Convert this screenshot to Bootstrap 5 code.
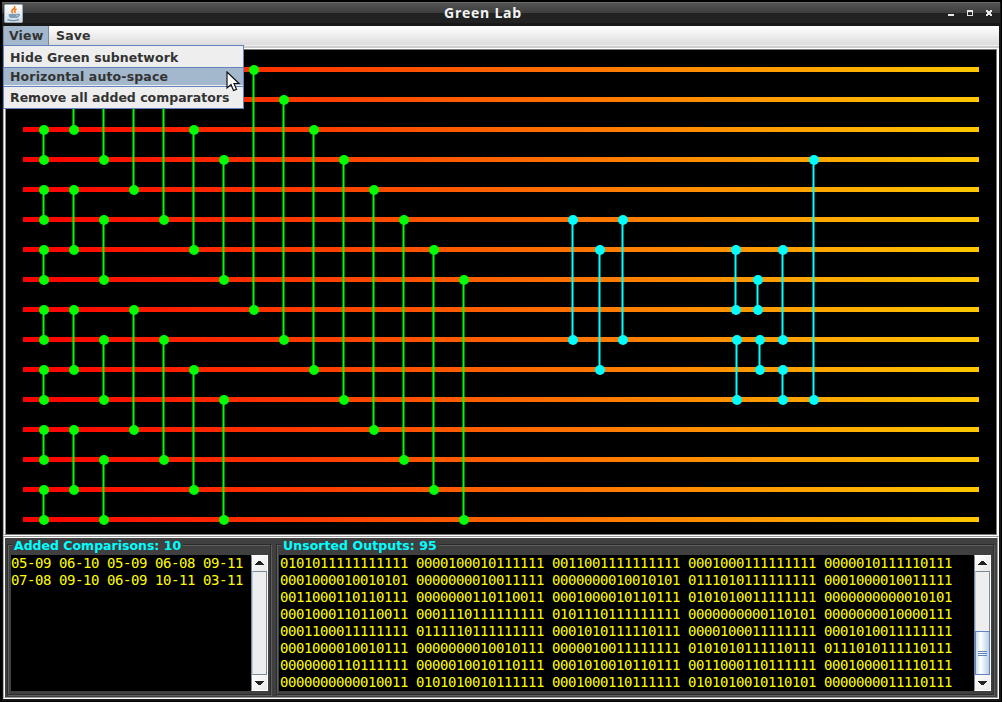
<!DOCTYPE html>
<html lang="en">
<head>
<meta charset="utf-8">
<title>Green Lab</title>
<link rel="stylesheet" href="https://cdn.jsdelivr.net/npm/bootstrap@5.3.0/dist/css/bootstrap.min.css">
<style>
body{width:1002px;height:702px;background:#000;overflow:hidden;font-family:"DejaVu Sans",sans-serif;font-size:12.5px;color:#333;line-height:16px}
.win{width:1002px;height:702px;border:1px solid #000;border-width:2px 1px 1px 2px;background:#161616;padding:0 2px 2px 1px}
.titlebar{height:24px;margin:0 -1px;background:linear-gradient(#6b6b6b 0 1px,#535353 1px,#3d3d3d 11px,#222 11px 21px,#191919 21px)}
.java-icon{left:2px;top:2px}
.win-title{font:bold 14px/22px "Open Sans","Noto Sans",sans-serif;color:#f4f4f4;letter-spacing:.75px;padding-right:36px}
.win-btns{right:5px;top:6px}
.menubar{height:22px;background:linear-gradient(#fff,#dcdcdc 19px,#eee 19px 20px,#ccc 20px)}
.menu-top{height:20px;padding:0 7px;font-weight:bold;line-height:20px;letter-spacing:.15px}
.menu-top.open{width:46px;background:#a3b8cc;border-right:1px solid #7a8a99;border-left:1px solid #7a8a99;padding:0 5px}
.menu-pop{left:0;top:19px;width:241px;height:64px;background:#eee;border:1px solid #6382bf;z-index:5;font-weight:bold}
.menu-item{padding-left:6px;white-space:nowrap;letter-spacing:.09px}
.menu-item.hot{background:#a3b8cc;border-top:1px solid #6382bf;border-bottom:1px solid #eee;letter-spacing:.14px}
.menu-item.last{letter-spacing:0}
.pointer{left:223px;top:45px;z-index:6}
.canvas-frame{height:488px;border:1px solid;border-color:#fff #fff #fff #aaa;border-right-width:2px;background:#000}
.canvas-in{height:486px;border:1px solid;border-color:#777 #777 #777 #fff;padding-left:1px;background:#888}
.lower{height:163px;background:#404040;border:1px solid;border-color:#999 #fff #fff #aaa}
.lower-in{height:161px;border:1px solid;border-color:#fff #999 #999 #fff;padding:6px 3px 2px 2px;gap:5px}
.etched{height:151px;border:1px solid #2c2c2c;box-shadow:inset 1px 1px #5e5e5e,1px 1px #5e5e5e}
.caption-tag{left:4px;top:-6px;background:#404040;color:#0ff;font-weight:bold;padding:0 2px;line-height:13px;white-space:nowrap}
.caption-tag.wide{letter-spacing:.06px}
.pane{margin:10px 2px 2px 3px;height:136px;background:#000}
.out{margin:0;font:14px/17px "DejaVu Sans Mono",monospace;letter-spacing:-.428px;color:#ff0;overflow:hidden}
.sbar{width:17px;background:#eee;border:1px solid;border-color:#fff #fff #fff #7a8a99}
.sbtn{height:15px;background:linear-gradient(135deg,#fff,#e8e8e8)}
.track{border:1px solid #7a8a99;border-left-color:#b8cfe5}
.thumb{height:44px;background:linear-gradient(90deg,#c8dbee,#fff 35%,#b8cfe5);border:1px solid #6382bf;margin:0 -1px -1px}
svg{display:block}
</style>
</head>
<body>
<div class="win">
  <header class="titlebar position-relative text-center">
    <svg class="java-icon position-absolute" width="19" height="19" viewBox="0 0 19 19">
      <defs><linearGradient id="jb" x2="0" y2="1"><stop stop-color="#fff"/><stop offset="1" stop-color="#cfdbe5"/></linearGradient></defs>
      <rect x=".5" y=".5" width="18" height="18" rx="1" fill="url(#jb)" stroke="#9aaab6"/>
      <path d="M10.500 2q1 2-1.500 3.500t0 4M12.500 5q-3 1.500-1 4" fill="none" stroke="#ee7a16" stroke-width="1.500"/>
      <path d="M4.500 10h8.500q-.5 3-1.500 4h-5Q4.500 13 4.500 10z" fill="#7d9db5"/>
      <path d="M13 10.500q3-.5 2 1t-3 2M3.500 15.700q5.500 2 11.500 0" fill="none" stroke="#7192ad" stroke-width="1.300"/>
    </svg>
    <div class="win-title">Green Lab</div>
    <svg class="win-btns position-absolute" width="48" height="14" shape-rendering="crispEdges">
      <path d="M1 6h6v2H1z" fill="#e6e6e6"/>
      <path d="M20 2h6v6h-6zM21 4v3h4V4z" fill="#e6e6e6" fill-rule="evenodd"/>
      <path d="M39 2h2v1h2V2h2v2h-1v2h1v2h-2V7h-2v1h-2V6h1V4h-1z" fill="#e6e6e6"/>
    </svg>
  </header>
  <div class="position-relative">
    <nav class="menubar d-flex">
      <div class="menu-top open">View</div>
      <div class="menu-top">Save</div>
    </nav>
    <div class="menu-pop position-absolute">
      <div class="menu-item" style="height:21px;line-height:24px">Hide Green subnetwork</div>
      <div class="menu-item hot" style="height:19px;line-height:18px">Horizontal auto-space</div>
      <div class="menu-item last" style="height:22px;line-height:21px;border-top:1px solid #6382bf">Remove all added comparators</div>
    </div>
    <svg class="pointer position-absolute" width="15" height="22" viewBox="0 0 15 22"><path d="M1 1v16l4-3.500 2.500 6 3-1.200L8 12.500h5z" fill="#fff" stroke="#111" stroke-width="1.200"/></svg>
  </div>
  <main class="canvas-frame"><div class="canvas-in">
    <svg id="network" width="990" height="484" viewBox="6 50 990 484" style="background:#000">
      <defs><linearGradient id="wire" gradientUnits="userSpaceOnUse" x1="23" x2="979" y1="0" y2="0"><stop stop-color="#f00"/><stop offset="1" stop-color="#ffc800"/></linearGradient></defs>
    </svg>
  </div></main>
  <section class="lower"><div class="lower-in d-flex">
    <div class="etched position-relative" style="width:264px">
      <div class="caption-tag position-absolute">Added Comparisons: 10</div>
      <div class="pane d-flex">
<pre class="out flex-grow-1">05-09 06-10 05-09 06-08 09-11
07-08 09-10 06-09 10-11 03-11</pre>
        <div class="sbar d-flex flex-column">
          <div class="sbtn"><svg width="15" height="15"><path d="M3 9h9L8.500 5h-2z" fill="#222" shape-rendering="crispEdges"/></svg></div>
          <div class="track flex-grow-1"></div>
          <div class="sbtn"><svg width="15" height="15"><path d="M3 6h9L8.500 10h-2z" fill="#222" shape-rendering="crispEdges"/></svg></div>
        </div>
      </div>
    </div>
    <div class="etched position-relative flex-grow-1">
      <div class="caption-tag wide position-absolute">Unsorted Outputs: 95</div>
      <div class="pane d-flex" style="margin-left:2px">
<pre class="out flex-grow-1" style="padding-left:1px">0101011111111111 0000100010111111 0011001111111111 0001000111111111 0000010111110111
0001000010010101 0000000010011111 0000000010010101 0111010111111111 0001000010011111
0011000110110111 0000000110110011 0001000010110111 0101010011111111 0000000000010101
0001000110110011 0001110111111111 0101110111111111 0000000000110101 0000000010000111
0001100011111111 0111110111111111 0001010111110111 0000100011111111 0001010011111111
0001000010010111 0000000010010111 0000010011111111 0101010111110111 0111010111110111
0000000110111111 0000010010110111 0001010010110111 0011000110111111 0001000011110111
0000000000010011 0101010010111111 0001000110111111 0101010010110101 0000000011110111</pre>
        <div class="sbar d-flex flex-column">
          <div class="sbtn"><svg width="15" height="15"><path d="M3 9h9L8.500 5h-2z" fill="#222" shape-rendering="crispEdges"/></svg></div>
          <div class="track flex-grow-1 d-flex flex-column justify-content-end"><div class="thumb"><svg width="13" height="42"><path d="M2 19.500h9M2 21.500h9M2 23.500h9" stroke="#6382bf"/></svg></div></div>
          <div class="sbtn"><svg width="15" height="15"><path d="M3 6h9L8.500 10h-2z" fill="#222" shape-rendering="crispEdges"/></svg></div>
        </div>
      </div>
    </div>
  </div></section>
</div>
<script src="https://cdn.jsdelivr.net/npm/bootstrap@5.3.0/dist/js/bootstrap.bundle.min.js"></script>
<script>
const svg = document.getElementById('network');
let s = '';
for (let i = 0; i < 16; i++) s += `<rect x="23" y="${67 + 30 * i}" width="956" height="5" fill="url(#wire)"/>`;
function comparator(x, a, b, c) {
  const y1 = 70 + 30 * a, y2 = 70 + 30 * b;
  s += `<path d="M${x - .5} ${y1}V${y2}" stroke="${c}" stroke-width="2"/><circle cx="${x}" cy="${y1}" r="5" fill="${c}"/><circle cx="${x}" cy="${y2}" r="5" fill="${c}"/>`;
}
// the fixed green subnetwork: strides 1, 2, 4 and 8
let x = 44;
for (const d of [1, 2, 4, 8]) for (let k = 0; k < d; k++, x += 30)
  for (let i = k; i < 16; i += 2 * d) comparator(x, i, i + d, '#0f0');
// comparators added by hand
[[573,5,9],[600,6,10],[623,5,9],[736,6,8],[758,7,8],[783,6,9],[737,9,11],[760,9,10],[783,10,11],[814,3,11]]
  .forEach(c => comparator(...c, '#0ff'));
svg.insertAdjacentHTML('beforeend', s);
</script>
</body>
</html>
